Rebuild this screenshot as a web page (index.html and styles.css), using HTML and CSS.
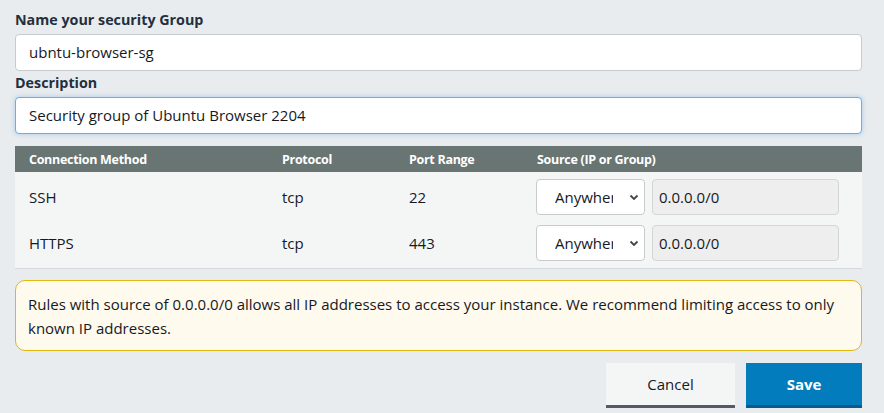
FILE: index.html
```html
<!DOCTYPE html>
<html>
<head>
<meta charset="utf-8">
<link rel="stylesheet" href="styles.css">
</head>
<body>
<div class="page">
  <label class="label">Name your security Group</label>
  <div class="input">ubntu-browser-sg</div>
  <label class="label label-desc">Description</label>
  <div class="input input-focus">Security group of Ubuntu Browser 2204</div>

  <div class="table">
    <div class="row head">
      <div class="c1">Connection Method</div>
      <div class="c2">Protocol</div>
      <div class="c3">Port Range</div>
      <div class="c4">Source (IP or Group)</div>
    </div>
    <div class="row body first">
      <div class="c1">SSH</div>
      <div class="c2">tcp</div>
      <div class="c3">22</div>
      <div class="c4 src">
        <div class="select"><span class="sel-text">Anywhere</span><svg class="chev" width="10" height="7" viewBox="0 0 10 7"><path d="M1.5 1.5 L5 5 L8.5 1.5" fill="none" stroke="#444" stroke-width="1.8"/></svg></div>
        <div class="cidr">0.0.0.0/0</div>
      </div>
    </div>
    <div class="row body last">
      <div class="c1">HTTPS</div>
      <div class="c2">tcp</div>
      <div class="c3">443</div>
      <div class="c4 src">
        <div class="select"><span class="sel-text">Anywhere</span><svg class="chev" width="10" height="7" viewBox="0 0 10 7"><path d="M1.5 1.5 L5 5 L8.5 1.5" fill="none" stroke="#444" stroke-width="1.8"/></svg></div>
        <div class="cidr">0.0.0.0/0</div>
      </div>
    </div>
  </div>

  <div class="warning">Rules with source of 0.0.0.0/0 allows all IP addresses to access your instance. We recommend limiting access to only known IP addresses.</div>

  <div class="actions">
    <div class="btn btn-cancel">Cancel</div>
    <div class="btn btn-save">Save</div>
  </div>
</div>
</body>
</html>
```

FILE: styles.css
```css
* { box-sizing: border-box; }
html, body {
  margin: 0;
  padding: 0;
  background: #e9ecee;
}
body {
  font-family: "Open Sans", "Noto Sans", sans-serif;
  color: #16191f;
  width: 884px;
  height: 413px;
  overflow: hidden;
}
.page {
  padding: 8px 22px 0 15px;
  display: flex;
  flex-direction: column;
}
.label {
  display: block;
  font-weight: 700;
  font-size: 14.3px;
  line-height: 24px;
  color: #232f3e;
  height: 26px;
}
.label-desc {
  margin-top: 0;
}
.input {
  height: 37px;
  background: #fff;
  border: 1px solid #c8cacc;
  border-radius: 4px;
  padding: 0 13px;
  font-size: 15px;
  line-height: 35px;
  color: #16191f;
}
.input-focus {
  border-color: #6aaee8;
  box-shadow: 0 0 5px rgba(80, 160, 230, 0.45);
}
.table {
  margin-top: 12px;
  display: flex;
  flex-direction: column;
}
.row {
  display: grid;
  grid-template-columns: 253px 127px 128px 1fr;
  padding-left: 14px;
  align-items: center;
}
.head {
  background: #687573;
  height: 26px;
  color: #fff;
  font-weight: 700;
  font-size: 12.5px;
  letter-spacing: -0.3px;
}
.body {
  background: #f4f6f6;
  height: 48px;
  font-size: 15px;
  color: #16191f;
}
.first { padding-top: 2px; height: 48px; }
.last { height: 49px; border-bottom: 1px solid #d5d9d9; padding-bottom: 2px; }
.src {
  display: flex;
  gap: 7px;
  margin-left: -1px;
}
.select {
  width: 109px;
  height: 36px;
  background: #fff;
  border: 1px solid #c8cacc;
  border-radius: 4px;
  display: flex;
  align-items: center;
  padding-left: 18px;
  padding-right: 4px;
  overflow: hidden;
}
.sel-text {
  flex: none;
  width: 58px;
  overflow: hidden;
  white-space: nowrap;
  font-size: 15px;
  color: #16191f;
}
.chev {
  flex: none;
  margin-left: 16px;
}
.cidr {
  width: 187px;
  height: 36px;
  background: #eeeeee;
  border: 1px solid #d3d5d6;
  border-radius: 4px;
  padding-left: 6px;
  line-height: 34px;
  font-size: 15px;
  color: #16191f;
}
.warning {
  margin-top: 11px;
  background: #fffaee;
  border: 1px solid #e2b80e;
  border-radius: 10px;
  padding: 11px 13px 9px 12px;
  font-size: 15px;
  line-height: 24px;
  color: #16191f;
  height: 71px;
}
.actions {
  margin-top: 12px;
  display: flex;
  justify-content: flex-end;
  gap: 11px;
}
.btn {
  height: 45px;
  display: flex;
  align-items: center;
  justify-content: center;
  font-size: 15px;
}
.btn-cancel {
  width: 129px;
  background: #f4f6f6;
  border-bottom: 3px solid #545b64;
  color: #16191f;
}
.btn-save {
  width: 116px;
  background: #037cbd;
  border-bottom: 3px solid #0a5a8e;
  color: #fff;
  font-weight: 700;
}
```
